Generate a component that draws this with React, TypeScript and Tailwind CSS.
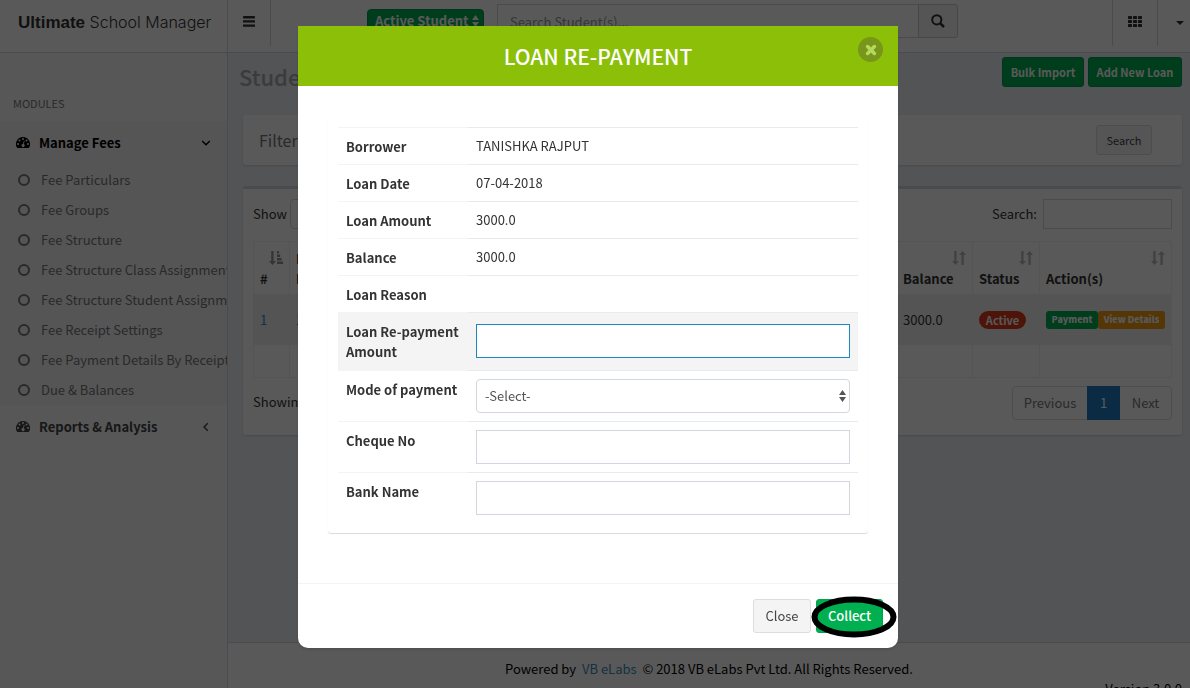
import type { ReactNode } from "react";

const FEE_LINKS = [
  "Fee Particulars",
  "Fee Groups",
  "Fee Structure",
  "Fee Structure Class Assignment",
  "Fee Structure Student Assignment",
  "Fee Receipt Settings",
  "Fee Payment Details By Receipt No",
  "Due & Balances",
];

const LOAN_DETAILS = [
  { label: "Borrower", value: "TANISHKA RAJPUT" },
  { label: "Loan Date", value: "07-04-2018" },
  { label: "Loan Amount", value: "3000.0" },
  { label: "Balance", value: "3000.0" },
  { label: "Loan Reason", value: "" },
];

function DashboardIcon() {
  return (
    <svg viewBox="0 0 14 12" className="w-[14px] h-3 shrink-0" aria-hidden="true">
      <path
        fill="currentColor"
        fillRule="evenodd"
        d="M7 0a7 7 0 0 0-5.9 10.8q.2.2.5.2h10.8q.3 0 .5-.2A7 7 0 0 0 7 0ZM2 6a1 1 0 1 1 0 2 1 1 0 0 1 0-2Zm1.5-3.5a1 1 0 1 1 0 2 1 1 0 0 1 0-2ZM7 1a1 1 0 1 1 0 2 1 1 0 0 1 0-2Zm3.5 1.5a1 1 0 1 1 0 2 1 1 0 0 1 0-2ZM12 6a1 1 0 1 1 0 2 1 1 0 0 1 0-2ZM7.9 3.8l.7.2-.8 3.2a1.5 1.5 0 1 1-.8-.2Z"
      />
    </svg>
  );
}

function BarsIcon() {
  return (
    <svg viewBox="0 0 12 11" className="w-3 h-[11px]" fill="currentColor" aria-hidden="true">
      <rect width="12" height="2.4" rx=".4" />
      <rect y="4.2" width="12" height="2.4" rx=".4" />
      <rect y="8.4" width="12" height="2.4" rx=".4" />
    </svg>
  );
}

function GridIcon() {
  return (
    <svg viewBox="0 0 14 11" className="w-[14px] h-[11px]" fill="currentColor" aria-hidden="true">
      {[0, 5, 10].map((x) => [0, 4, 8].map((y) => <rect key={`${x}-${y}`} x={x} y={y} width="4" height="3" rx=".6" />))}
    </svg>
  );
}

function SearchIcon() {
  return (
    <svg viewBox="0 0 14 14" className="w-[14px] h-[14px]" fill="none" stroke="currentColor" aria-hidden="true">
      <circle cx="5.8" cy="5.8" r="4.6" strokeWidth="2" />
      <path d="M9.3 9.3 13 13" strokeWidth="2.6" />
    </svg>
  );
}

function UpDownIcon() {
  return (
    <svg viewBox="0 0 7 12" className="w-[7px] h-3" fill="currentColor" aria-hidden="true">
      <path d="M3.5 0 7 5H0ZM3.5 12 0 7h7Z" />
    </svg>
  );
}

function AngleIcon({ dir }: { dir: "down" | "left" }) {
  return (
    <svg viewBox="0 0 10 10" className="w-[10px] h-[10px]" fill="none" stroke="currentColor" strokeWidth="1.4" aria-hidden="true">
      <path d={dir === "down" ? "M1.2 3 5 6.8 8.8 3" : "M6.8 1.2 3 5l3.8 3.8"} />
    </svg>
  );
}

function SortIcon({ sorted = false }: { sorted?: boolean }) {
  return (
    <svg
      viewBox="0 0 14 14"
      className={`absolute right-[6px] top-[9px] w-[14px] h-[14px] ${sorted ? "text-[#999]" : "text-[#bbb]"}`}
      fill="currentColor"
      aria-hidden="true"
    >
      <path d="M2.2 0h2.4v10H7l-3.6 4L0 10h2.2Z" />
      {sorted ? (
        <path d="M8 0h2v2.4H8ZM8 3.5h3.2v2.4H8ZM8 7h4.6v2.4H8ZM8 10.6h6V13H8Z" />
      ) : (
        <path d="M9.4 14h2.4V4H14l-3.4-4L7 4h2.4Z" />
      )}
    </svg>
  );
}

function Th({ children, sorted }: { children: ReactNode; sorted?: boolean }) {
  return (
    <th className="relative h-[53px] border border-b-2 border-[#f0f0f0] px-[6px] pb-[5px] align-bottom text-left font-bold">
      <SortIcon sorted={sorted} />
      {children}
    </th>
  );
}

function TopBar() {
  return (
    <header className="flex h-[53px] shrink-0 border-b border-[#d2d6de] bg-white text-[#333]">
      <a href="#" className="w-[228px] shrink-0 border-r border-[#d2d6de] pl-[18px] pt-[11px] text-[16px] leading-[22px] whitespace-nowrap font-['Inter',sans-serif]">
        <b className="font-['Liberation_Sans',sans-serif] text-[17px]">Ultimate</b>{" "}
        <span className="font-light">School Manager</span>
      </a>
      <button aria-label="Toggle navigation" className="flex h-[46px] w-[43px] items-center justify-center border-r border-[#d2d6de] pb-1">
        <BarsIcon />
      </button>
      <form className="ml-24 flex items-start">
        <div className="relative mt-[9px] mr-[13px] text-white">
          <select aria-label="Student status" className="h-7 w-[117px] appearance-none rounded-[4px] border border-[#009a4e] bg-[#00b050] pb-[5px] pl-[7px] text-[13px] leading-5 font-bold">
            <option>Active Student</option>
          </select>
          <span className="pointer-events-none absolute right-[5px] top-[6px]">
            <UpDownIcon />
          </span>
        </div>
        <input
          aria-label="Search students"
          placeholder="Search Student(s)..."
          className="mt-1 h-[34px] w-[422px] border border-[#d2d6de] px-3 text-[13px] placeholder:text-[#999]"
        />
        <button type="button" aria-label="Search" className="mt-1 -ml-px flex h-[34px] w-10 items-center justify-center rounded-r-[3px] border border-[#ccc] bg-[#f4f4f4]">
          <SearchIcon />
        </button>
      </form>
      <div className="ml-auto flex">
        <button aria-label="Apps" className="flex h-[46px] w-[46px] items-center justify-center border-x border-[#d2d6de] pb-1">
          <GridIcon />
        </button>
        <button aria-label="Account" className="flex h-[46px] w-8 items-center justify-center pl-3">
          <svg viewBox="0 0 8 4" className="w-2 h-1" aria-hidden="true">
            <path d="M0 0h8L4 4Z" fill="currentColor" />
          </svg>
        </button>
      </div>
    </header>
  );
}

function Sidebar() {
  return (
    <nav className="w-[228px] shrink-0 overflow-hidden border-r border-[#d2d6de] bg-[#f9fafc] whitespace-nowrap">
      <div className="h-[68px] pl-[13px] pt-10 text-[11px] leading-5 text-[#777]">MODULES</div>
      <div className="bg-[#f4f4f5]">
        <a href="#" className="flex h-11 items-center pl-4 pr-4 font-bold text-black">
          <DashboardIcon />
          <span className="ml-[9px] flex-1">Manage Fees</span>
          <AngleIcon dir="down" />
        </a>
        <ul>
          {FEE_LINKS.map((link) => (
            <li key={link}>
              <a href="#" className="flex h-[30px] items-center pl-[18px] text-[#777]">
                <span className="mr-[11px] h-3 w-3 shrink-0 rounded-full border-2 border-current" />
                {link}
              </a>
            </li>
          ))}
        </ul>
      </div>
      <a href="#" className="flex h-11 items-center pl-4 pr-4 font-bold text-[#444]">
        <DashboardIcon />
        <span className="ml-[9px] flex-1">Reports &amp; Analysis</span>
        <AngleIcon dir="left" />
      </a>
    </nav>
  );
}

function LoansTable() {
  return (
    <table className="mt-3 w-full table-fixed border-collapse">
      <colgroup>
        <col className="w-9" />
        <col className="w-24" />
        <col />
        <col />
        <col />
        <col className="w-[76px]" />
        <col className="w-[67px]" />
        <col className="w-[132px]" />
      </colgroup>
      <thead>
        <tr>
          <Th sorted>#</Th>
          <Th>
            Loan
            <br />
            Number
          </Th>
          <Th>Borrower</Th>
          <Th>Loan Date</Th>
          <Th>Loan Amount</Th>
          <Th>Balance</Th>
          <Th>Status</Th>
          <Th>Action(s)</Th>
        </tr>
      </thead>
      <tbody>
        <tr className="h-[50px] bg-[#f1f1f1] [&>td]:border [&>td]:border-[#f0f0f0] [&>td]:px-[6px]">
          <td>
            <a href="#" className="text-[#3c8dbc]">1</a>
          </td>
          <td>1</td>
          <td>TANISHKA RAJPUT</td>
          <td>07-04-2018</td>
          <td>3000.0</td>
          <td>3000.0</td>
          <td>
            <span className="inline-block h-[18px] w-[47px] rounded-full bg-[#dd3a1e] text-center text-[11px] leading-[18px] font-bold text-white">Active</span>
          </td>
          <td>
            <div className="flex text-center text-[9px] leading-[18px] font-black text-white">
              <button className="h-[18px] w-[52px] rounded-[3px] bg-[#00b050]">Payment</button>
              <button className="h-[18px] w-[67px] rounded-[3px] bg-[#f39c12] whitespace-nowrap">View Details</button>
            </div>
          </td>
        </tr>
        <tr className="h-[33px] [&>td]:border [&>td]:border-[#f0f0f0]">
          {[0, 1, 2, 3, 4, 5, 6, 7].map((i) => (
            <td key={i} />
          ))}
        </tr>
      </tbody>
    </table>
  );
}

function Content() {
  return (
    <main className="flex h-[589px] flex-col bg-[#ecf0f5] pr-2 pl-[15px]">
      <div className="flex items-start pt-1">
        <h1 className="-ml-1 flex-1 text-[22px] leading-[38px] font-medium text-[#aaa]">Student Loans</h1>
        <div className="flex gap-1 text-[11px] leading-5 font-bold text-white">
          <button className="h-[30px] w-[82px] rounded-[3px] border border-[#009a4e] bg-[#00b050]">Bulk Import</button>
          <button className="h-[30px] w-[94px] rounded-[3px] border border-[#009a4e] bg-[#00b050]">Add New Loan</button>
        </div>
      </div>
      <section className="mt-5 flex h-[50px] items-center justify-between rounded-[3px] bg-white pr-[30px] pl-4 shadow-sm">
        <h3 className="text-[16px] leading-6 text-[#777]">Filter</h3>
        <button className="h-[30px] w-14 rounded-[3px] border border-[#ddd] bg-[#f4f4f4] text-[11px] text-[#444]">Search</button>
      </section>
      <section className="mt-[21px] h-[249px] rounded-[3px] border-t-[3px] border-[#d2d6de] bg-white px-[10px] pt-[10px] shadow-sm">
        <div className="flex items-center justify-between">
          <label className="flex items-center gap-[3px]">
            Show
            <select className="h-[30px] w-[70px] appearance-none rounded-[4px] border border-[#d2d6de] px-2">
              <option>10</option>
            </select>
            entries
          </label>
          <label className="flex items-center gap-[6px]">
            Search:
            <input className="h-[30px] w-[129px] border border-[#d2d6de]" />
          </label>
        </div>
        <LoansTable />
        <div className="mt-2 flex items-start justify-between">
          <p className="pt-[6px]">Showing 1 to 1 of 1 entries</p>
          <div className="flex h-[34px] rounded-[4px] border border-[#ddd] text-[#777]">
            <button className="w-[74px]">Previous</button>
            <button className="-my-px w-[33px] bg-[#1e7cc0] text-white">1</button>
            <button className="w-[51px]">Next</button>
          </div>
        </div>
      </section>
    </main>
  );
}

function Field({ id, label, active, children }: { id: string; label: string; active?: boolean; children: ReactNode }) {
  return (
    <tr className={`align-top ${active ? "bg-[#f4f4f4]" : ""}`}>
      <th scope="row" className="w-[130px] border-t border-[#f4f4f4] px-2 pt-[9px] pb-2 text-left font-bold">
        <label htmlFor={id} className="block">{label}</label>
      </th>
      <td className={`border-t border-[#e7eaee] px-2 pb-2 ${active ? "pt-[11px]" : "pt-2"}`}>{children}</td>
    </tr>
  );
}

function RepaymentDialog() {
  return (
    <div role="dialog" aria-labelledby="repay-title" className="w-[600px] rounded-b-[10px] bg-white text-[#333] shadow-[0_2px_3px_rgba(0,0,0,0.125)]">
      <div className="relative flex h-[60px] items-center justify-center bg-[#8bbf08]">
        <h4 id="repay-title" className="text-[21px] leading-7 font-medium text-white">LOAN RE-PAYMENT</h4>
        <button aria-label="Close dialog" className="absolute top-[11px] right-[15px] flex h-[25px] w-[25px] items-center justify-center rounded-full bg-[#77961a] text-[#b5d95d]">
          <svg viewBox="0 0 12 12" className="w-3 h-3" aria-hidden="true">
            <path d="M2.6 2.6l6.8 6.8M9.4 2.6 2.6 9.4" stroke="currentColor" strokeWidth="3.6" strokeLinecap="round" />
          </svg>
        </button>
      </div>
      <div className="px-[30px] pt-[31px] pb-[50px]">
        <div className="rounded-[3px] p-[10px] shadow-[0_1px_1px_rgba(0,0,0,0.15)]">
          <table className="w-full border-separate border-spacing-0">
            <tbody>
              {LOAN_DETAILS.map((d) => (
                <tr key={d.label} className="align-top">
                  <th scope="row" className="w-[130px] border-t border-[#f4f4f4] px-2 pt-[9px] pb-[7px] text-left font-bold">{d.label}</th>
                  <td className="border-t border-[#e7eaee] px-2 py-2">{d.value}</td>
                </tr>
              ))}
              <Field id="amount" label="Loan Re-payment Amount" active>
                <input id="amount" className="block h-[34px] w-full border border-[#1d87bf] bg-white px-3 outline-none" />
              </Field>
              <Field id="mode" label="Mode of payment">
                <div className="relative text-[#555]">
                  <select id="mode" className="block h-[34px] w-full appearance-none rounded-[4px] border border-[#d2d6de] bg-white px-2">
                    <option>-Select-</option>
                  </select>
                  <span className="pointer-events-none absolute top-[11px] right-1">
                    <UpDownIcon />
                  </span>
                </div>
              </Field>
              <Field id="cheque" label="Cheque No">
                <input id="cheque" className="block h-[34px] w-full border border-[#d2d6de] px-3" />
              </Field>
              <Field id="bank" label="Bank Name">
                <input id="bank" className="block h-[34px] w-full border border-[#d2d6de] px-3" />
              </Field>
            </tbody>
          </table>
        </div>
      </div>
      <div className="flex justify-end gap-[5px] border-t border-[#f4f4f4] p-[15px]">
        <button className="h-[34px] w-[58px] rounded-[3px] border border-[#ddd] bg-[#f4f4f4] text-[#444]">Close</button>
        <div className="relative">
          <button className="h-[34px] w-[67px] rounded-[3px] border border-[#00a34c] bg-[#00b050] font-medium text-white">Collect</button>
          <svg viewBox="0 0 86 42" className="pointer-events-none absolute -top-[3px] -left-[5px] h-[42px] w-[86px] max-w-none" aria-hidden="true">
            <ellipse cx="43" cy="21" rx="39.5" ry="17.5" fill="none" stroke="#000" strokeWidth="6" />
          </svg>
        </div>
      </div>
    </div>
  );
}

export default function App() {
  return (
    <div className="h-screen overflow-hidden bg-white text-[13px] leading-5 text-[#333] font-['Noto_Sans_CJK_SC',sans-serif]">
      <TopBar />
      <div className="flex min-h-full">
        <Sidebar />
        <div className="min-w-0 flex-1">
          <Content />
          <footer className="border-t border-[#d2d6de] bg-white px-2 pt-4 text-black">
            <p className="text-center">
              Powered by &nbsp;<a href="#" className="text-[#3c8dbc]">VB eLabs</a>&nbsp; © 2018 VB eLabs Pvt Ltd. All Rights Reserved.
            </p>
            <p className="text-right">Version 3.0.0</p>
          </footer>
        </div>
      </div>
      <div className="fixed inset-0 flex items-start justify-center bg-black/65 pt-[26px] pl-[6px]">
        <RepaymentDialog />
      </div>
    </div>
  );
}
